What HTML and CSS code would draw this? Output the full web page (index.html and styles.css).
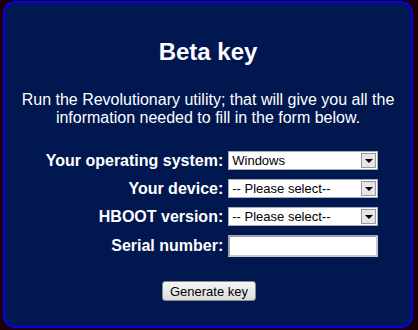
FILE: index.html
```html
<!DOCTYPE html>
<html lang="en">
<head>
  <meta charset="UTF-8" />
  <title>Beta key</title>
  <link rel="stylesheet" href="styles.css">
</head>
<body>

  <div class="panel">
    <h1>Beta key</h1>
    <p class="intro">
      Run the Revolutionary utility; that will give you all the
      information needed to fill in the form below.
    </p>

    <form class="key-form" onsubmit="return false;">
      <label for="os">Your operating system:</label>
      <div class="select-wrap">
        <select id="os">
          <option>Windows</option>
          <option>Mac OS X</option>
          <option>Linux</option>
        </select>
        <span class="select-btn"><span class="arrow"></span></span>
      </div>

      <label for="device">Your device:</label>
      <div class="select-wrap">
        <select id="device">
          <option>-- Please select--</option>
        </select>
        <span class="select-btn"><span class="arrow"></span></span>
      </div>

      <label for="hboot">HBOOT version:</label>
      <div class="select-wrap">
        <select id="hboot">
          <option>-- Please select--</option>
        </select>
        <span class="select-btn"><span class="arrow"></span></span>
      </div>

      <label for="serial">Serial number:</label>
      <input type="text" id="serial" />

      <div class="actions">
        <button type="submit">Generate key</button>
      </div>
    </form>
  </div>

</body>
</html>
```

FILE: styles.css
```css
* {
  box-sizing: border-box;
  margin: 0;
  padding: 0;
}

body {
  font-family: "Liberation Sans", Arial, sans-serif;
  background-color: #1e0000;
  color: #fff;
  padding: 1px 5px 2px 3px;
}

.panel {
  height: 327px;
  background-color: #00174f;
  border: 2px solid #0000ff;
  border-radius: 12px;
  padding-top: 35px;
  text-align: center;
}

.panel h1 {
  font-size: 24px;
  font-weight: bold;
  line-height: 28px;
}

.intro {
  font-size: 16px;
  line-height: 18px;
  margin-top: 25px;
  padding: 0 4px;
}

.key-form {
  display: grid;
  grid-template-columns: auto 150px;
  justify-content: center;
  align-items: center;
  column-gap: 5px;
  row-gap: 9px;
  margin-top: 24px;
  margin-left: 8px;
}

.key-form label {
  font-size: 16px;
  font-weight: bold;
  text-align: right;
}

.select-wrap {
  position: relative;
  width: 150px;
  height: 19px;
}

.select-wrap select {
  appearance: none;
  -webkit-appearance: none;
  width: 100%;
  height: 100%;
  border: 1px solid #a5acb5;
  background-color: #fff;
  font-family: "Liberation Sans", Arial, sans-serif;
  font-size: 13px;
  color: #000;
  padding: 0 0 0 3px;
  border-radius: 0;
  outline: none;
}

.select-btn {
  position: absolute;
  top: 2px;
  right: 2px;
  width: 15px;
  height: 15px;
  background-color: #e6e6e6;
  border: 1px solid #9a9a9a;
  display: flex;
  align-items: center;
  justify-content: center;
  pointer-events: none;
}

.arrow {
  width: 0;
  height: 0;
  border-left: 4px solid transparent;
  border-right: 4px solid transparent;
  border-top: 4px solid #000;
  margin-top: 1px;
}

.key-form input {
  width: 150px;
  height: 22px;
  border: 2px solid #a0a0a8;
  border-right-color: #c8c8cc;
  border-bottom-color: #c8c8cc;
  background-color: #fff;
  font-size: 13px;
  outline: none;
}

.actions {
  grid-column: 1 / -1;
  text-align: center;
  margin-top: 15px;
  margin-left: -6px;
}

.actions button {
  font-family: "Liberation Sans", Arial, sans-serif;
  font-size: 13px;
  color: #000;
  height: 20px;
  padding: 0 7px;
  background: linear-gradient(#f6f6f6, #dcdcdc);
  border: 1px solid #8a8a8a;
  border-radius: 3px;
}
```
